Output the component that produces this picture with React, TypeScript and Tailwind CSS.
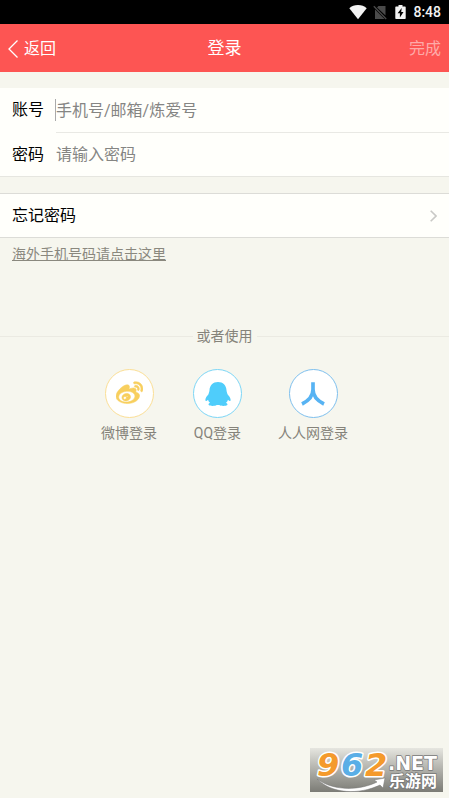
import React from "react";
import { FaWeibo } from "react-icons/fa";

// --- STATUS BAR ---
const StatusBar = () => (
    <div className="flex h-6 items-center justify-end bg-black pr-2 text-[#f2f2f2]">
        <svg className="h-4 w-[18px]" viewBox="0 0 18 16" fill="currentColor" aria-hidden="true">
            <path d="M9 15.2 0.3 4.3C2.6 2.3 5.6 1.1 9 1.1s6.400 1.200 8.700 3.200Z" />
        </svg>
        <svg className="ml-[6px] h-4 w-[14px] text-[#4a4a4a]" viewBox="0 0 14 16" aria-hidden="true">
            <path d="M5.500 2H12.500v9.500L4 3.500ZM2 5.500 11.500 15H2Z" fill="currentColor" />
            <path d="M0.800 2.300 13.200 15" stroke="currentColor" strokeWidth="1.300" />
        </svg>
        <svg className="ml-2 h-4 w-[11px]" viewBox="0 0 11 16" aria-hidden="true">
            <path d="M3.500 1h4v1.500H10a.7.7 0 0 1 .7.7V14.300a.7.7 0 0 1-.7.7H1a.7.7 0 0 1-.7-.7V3.200a.7.7 0 0 1 .7-.7h2.500Z" fill="currentColor" />
            <path d="M6.700 4 2.600 9.300h2.300V13.500L8.500 8H6.200Z" fill="#000" />
        </svg>
        <span className="ml-[7px] text-sm font-medium">8:48</span>
    </div>
);

// --- SOCIAL ICONS ---
const QqIcon = () => (
    <svg className="h-6 w-[26px]" viewBox="0 0 78 72" fill="#4fcdfb" aria-hidden="true">
        <path d="M39 0C54 0 64 10 64.500 25C65 30 67 34 67.500 37C71 41 77 48 77 54C77 58 73 58 69 53C68 57 66 60 63 62C67 64 68 66 67 69C65 72 48 73 43 69H35C30 73 13 72 11 69C10 66 11 64 15 62C12 60 10 57 9 53C5 58 1 58 1 54C1 48 7 41 10.500 37C11 34 13 30 13.500 25C14 10 24 0 39 0Z" />
    </svg>
);

const RenrenIcon = () => (
    <svg className="h-6 w-6" viewBox="0 0 72 72" fill="none" stroke="#57b3f3" strokeWidth="11" aria-hidden="true">
        <path d="M36 1V22C36 42 24 56 3 66M36 22C36 42 48 56 69 66" />
    </svg>
);

const providers = [
    { name: "微博登录", ring: "border-[#fbdf96]", icon: <FaWeibo size={27} color="#f8cf5e" stroke="#f8cf5e" strokeWidth={10} /> },
    { name: "QQ登录", ring: "border-[#7dd6f6]", icon: <QqIcon /> },
    { name: "人人网登录", ring: "border-[#7fc0ee]", icon: <RenrenIcon /> },
];

// --- SITE BADGE ---
const SiteBadge = () => (
    <div className="absolute right-[6px] bottom-[6px] h-11 w-[133px] bg-linear-to-b from-[#e6e6e0] to-[#7c7c76]">
        <svg className="h-full w-full overflow-visible" viewBox="0 0 133 44">
            <path d="M7 31C25 44 51 42 67 34L64 32 75 30 73 40 70 37C49 47 22 46 7 31Z" fill="#fff" stroke="#777" strokeWidth="0.500" />
            <g fontFamily="'DejaVu Sans', sans-serif" fontWeight="700" paintOrder="stroke" strokeLinejoin="round">
                <g fontSize="32" fontStyle="italic" stroke="#fff" strokeWidth="3">
                    <text x="7" y="28" fill="#f49a2c">9</text>
                    <text x="31" y="28" fill="#5aaee6">6</text>
                    <text x="55" y="28" fill="#f49a2c">2</text>
                </g>
                <text x="78" y="22" fontSize="19" fill="#fff" stroke="#777" strokeWidth="1.500">.NET</text>
            </g>
            <text x="79" y="39" fontSize="16" fontWeight="700" fontFamily="'Noto Sans CJK SC', sans-serif" fill="#fff" stroke="#777" strokeWidth="1.500" paintOrder="stroke">乐游网</text>
        </svg>
    </div>
);

export default function App() {
    return (
        <div className="relative min-h-screen bg-[#f6f6ee] font-[Roboto,'Noto_Sans_CJK_SC',sans-serif] text-base text-black">
            <StatusBar />

            <header className="grid h-12 grid-cols-3 items-center bg-[#fd5553] px-2 pt-px text-white">
                <button type="button" className="flex items-center gap-[6px] justify-self-start">
                    <svg className="h-[18px] w-[10px]" viewBox="0 0 10 18" fill="none" stroke="currentColor" strokeWidth="1.300" aria-hidden="true">
                        <path d="M9.500 0.500 1 9l8.500 8.500" />
                    </svg>
                    返回
                </button>
                <h1 className="text-center text-[17px]">登录</h1>
                <button type="button" className="justify-self-end text-[#feaaa8]">完成</button>
            </header>

            <main>
                <form className="mt-4 border-b border-[#e6e6e0] bg-[#fffffb]">
                    <div className="flex h-11 items-center pl-3">
                        <label htmlFor="account" className="w-[43px] shrink-0">账号</label>
                        <span className="h-[22px] w-px shrink-0 bg-[#aaaaaa]" />
                        <input id="account" type="text" placeholder="手机号/邮箱/炼爱号" className="h-full min-w-0 flex-1 outline-none placeholder:text-[#858583]" />
                    </div>
                    <div className="ml-14 h-px bg-[#e9e9e4]" />
                    <div className="flex h-[43px] items-center pl-3">
                        <label htmlFor="password" className="w-11 shrink-0">密码</label>
                        <input id="password" type="password" placeholder="请输入密码" className="h-full min-w-0 flex-1 outline-none placeholder:text-[#858583]" />
                    </div>
                </form>

                <button type="button" className="mt-4 flex h-[45px] w-full items-center justify-between border-y border-[#dcdcd7] bg-[#fffffb] px-3">
                    忘记密码
                    <svg className="h-3 w-[7px]" viewBox="0 0 7 12" fill="none" stroke="#c9c9c6" strokeWidth="1.600" aria-hidden="true">
                        <path d="M0.700 0.700 6 6 0.700 11.300" />
                    </svg>
                </button>

                <div className="mt-[6px] px-3 text-sm text-[#8a887e]">
                    <a href="#overseas" className="underline">海外手机号码请点击这里</a>
                </div>

                <div className="mt-[62px] flex items-center gap-1 text-sm text-[#85837a]">
                    <span className="h-px flex-1 bg-[#ebeae2]" />
                    或者使用
                    <span className="h-px flex-1 bg-[#ebeae2]" />
                </div>

                <div className="mt-[23px] flex justify-center gap-9 text-sm text-[#85837a]">
                    {providers.map((p) => (
                        <button key={p.name} type="button" className="flex flex-col items-center gap-[5px]">
                            <span className={`flex size-[49px] items-center justify-center rounded-full border bg-white ${p.ring}`}>
                                {p.icon}
                            </span>
                            {p.name}
                        </button>
                    ))}
                </div>
            </main>

            <SiteBadge />
        </div>
    );
}
